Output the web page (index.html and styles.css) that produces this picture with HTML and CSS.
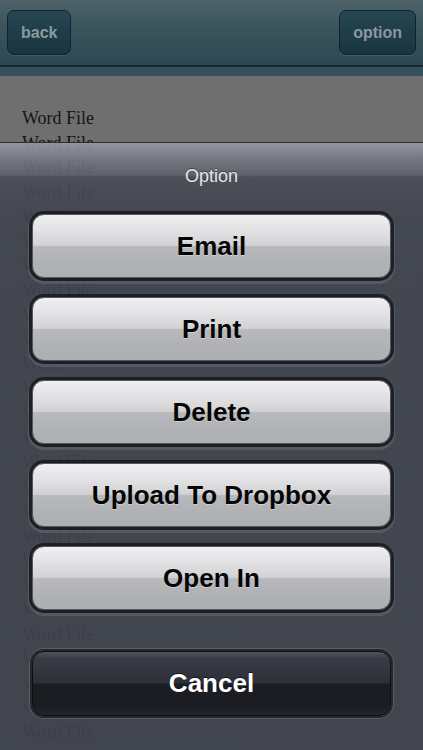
FILE: index.html
```html
<!DOCTYPE html>
<html>
<head>
<meta charset="utf-8">
<link rel="stylesheet" href="styles.css">
</head>
<body>
<div class="screen">
  <header class="navbar">
    <div class="nav-btn">back</div>
    <div class="nav-btn">option</div>
  </header>
  <div class="strip"></div>
  <div class="list">
    <div>Word File</div><div>Word File</div><div>Word File</div><div>Word File</div>
    <div>Word File</div><div>Word File</div><div>Word File</div><div>Word File</div>
    <div>Word File</div><div>Word File</div><div>Word File</div><div>Word File</div>
    <div>Word File</div><div>Word File</div><div>Word File</div><div>Word File</div>
    <div>Word File</div><div>Word File</div><div>Word File</div><div>Word File</div>
    <div>Word File</div><div>Word File</div><div>Word File</div><div>Word File</div>
    <div>Word File</div><div>Word File</div>
  </div>
  <div class="sheet">
    <div class="sheet-title">Option</div>
    <div class="actions">
      <div class="action">Email</div>
      <div class="action">Print</div>
      <div class="action">Delete</div>
      <div class="action">Upload To Dropbox</div>
      <div class="action">Open In</div>
    </div>
    <div class="action cancel">Cancel</div>
  </div>
</div>
</body>
</html>
```

FILE: styles.css
```css
html, body {
  margin: 0;
  padding: 0;
}
body {
  width: 423px;
  height: 750px;
  overflow: hidden;
  background: #6f6f6f;
}
.screen {
  position: relative;
  width: 423px;
  height: 750px;
  overflow: hidden;
  background: #6f6f6f;
}
.navbar {
  height: 67px;
  box-sizing: border-box;
  padding: 0 7px;
  display: flex;
  justify-content: space-between;
  align-items: center;
  background: linear-gradient(#4e6369 0%, #3b555d 40%, #2c4851 100%);
  border-bottom: 2px solid #17272d;
}
.nav-btn {
  height: 45px;
  box-sizing: border-box;
  padding: 0 13px;
  display: flex;
  align-items: center;
  border-radius: 7px;
  border: 1px solid #10232a;
  background: linear-gradient(#274753 0%, #1f3d48 50%, #1a3540 100%);
  box-shadow: 0 1px 0 rgba(120,150,160,0.25);
  color: #8a999e;
  font-family: "Liberation Sans", Arial, sans-serif;
  font-weight: bold;
  font-size: 16px;
}
.strip {
  height: 9px;
  background: #34505f;
}
.list {
  padding: 30px 0 0 22px;
  font-family: "Liberation Serif", "Times New Roman", serif;
  font-size: 18px;
  line-height: 24.56px;
  color: #151515;
}
.sheet {
  position: absolute;
  left: 0;
  right: 0;
  top: 142px;
  bottom: 0;
  border-top: 1px solid #2c2e33;
  background: linear-gradient(rgba(150,154,164,0.93) 0px, rgba(120,124,134,0.92) 14px, rgba(92,96,106,0.92) 32px, rgba(72,76,86,0.92) 34px, rgba(64,68,78,0.93) 80px, rgba(62,66,76,0.93) 100%);
  padding: 0 32px;
  box-sizing: border-box;
}
.sheet-title {
  padding-top: 21px;
  height: 24px;
  line-height: 24px;
  text-align: center;
  color: #e6e7ea;
  font-family: "Liberation Sans", Arial, sans-serif;
  font-size: 18px;
  text-shadow: 0 -1px 0 rgba(0,0,0,0.4);
}
.actions {
  margin-top: 26px;
  display: flex;
  flex-direction: column;
  gap: 19px;
}
.action {
  height: 64px;
  box-sizing: border-box;
  border-radius: 12px;
  border: 1px solid #55575d;
  background: linear-gradient(#f0f0f2 0%, #e2e2e4 25%, #d2d2d5 49%, #b8b9bc 51%, #b0b1b4 80%, #aeafb2 100%);
  box-shadow: 0 0 0 3px #1d1f24, 0 2px 0 4px rgba(110,114,122,0.45);
  display: flex;
  align-items: center;
  justify-content: center;
  color: #050505;
  font-family: "Liberation Sans", Arial, sans-serif;
  font-weight: bold;
  font-size: 26px;
  text-shadow: 0 1px 0 rgba(255,255,255,0.35);
}
.cancel {
  margin-top: 41px;
  height: 65px;
  border: 1px solid #0e0f12;
  background: linear-gradient(#51545c 0%, #3a3d45 10%, #2c2f37 49%, #1b1d23 51%, #1b1d23 85%, #23252b 100%);
  box-shadow: 0 0 0 2px #25272d, 0 0 0 3px rgba(110,114,122,0.55);
  color: #ffffff;
  text-shadow: 0 -1px 0 rgba(0,0,0,0.6);
}
```
